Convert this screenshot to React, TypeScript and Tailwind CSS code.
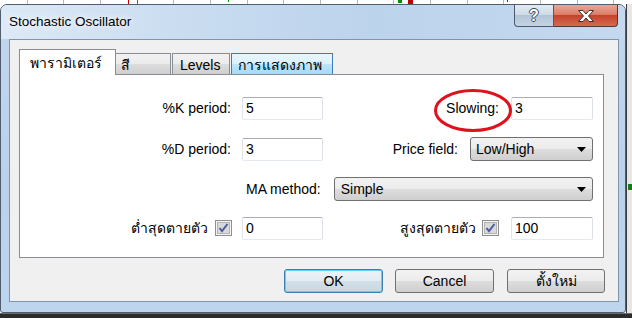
import React from 'react';

const gridLines = [27, 63, 100, 137, 173, 210, 247, 283, 320, 357, 393, 430, 467, 503, 540, 577, 613];

const TextBox = ({ value, className }: { value: string; className: string }) => (
  <div
    className={`h-[23px] rounded-[2px] border border-[#abadb3] border-b-[#e3e9ef] border-l-[#e2e3ea] border-r-[#dbdfe6] bg-white pl-[3px] text-[14px] leading-[21px] text-black ${className}`}
  >
    {value}
  </div>
);

const Select = ({ value, className }: { value: string; className: string }) => (
  <div
    className={`flex h-[24px] items-center rounded-[3px] border border-[#707070] bg-[linear-gradient(#f2f2f2_0%,#ebebeb_50%,#dddddd_50%,#cfcfcf_100%)] pl-[5px] pr-[6px] text-[14px] ${className}`}
  >
    <span className="flex-1">{value}</span>
    <svg width="9" height="5" viewBox="0 0 9 5">
      <path d="M0 0h9L4.5 5z" fill="#000" />
    </svg>
  </div>
);

const Check = () => (
  <svg width="17" height="16" viewBox="0 0 17 16">
    <rect x="0.5" y="0.5" width="16" height="15" fill="#f4f4f4" stroke="#8e8f8f" />
    <rect x="2.5" y="2.5" width="12" height="11" fill="#d9d9d9" stroke="#b4b4b4" />
    <path d="M4.5 8l2.5 3.2L12.5 4" stroke="#4a5f9e" strokeWidth="2" fill="none" />
  </svg>
);

const Button = ({ label, className }: { label: string; className: string }) => (
  <div
    className={`flex h-[24px] items-center justify-center rounded-[3px] border text-[14px] ${className}`}
  >
    {label}
  </div>
);

export default function App() {
  return (
    <div className="relative flex h-[318px] w-[632px] flex-col overflow-hidden bg-white font-['Liberation_Sans','DejaVu_Sans',sans-serif] text-black">
      {/* chart behind the dialog */}
      <div className="absolute inset-0">
        {gridLines.map((x) => (
          <div key={x} className="absolute top-0 h-full w-px bg-[#b8b8b8]" style={{ left: x }} />
        ))}
        <div className="absolute left-[128px] top-0 h-[4px] w-px bg-[#c80000]" />
        <div className="absolute left-[137px] top-0 h-[4px] w-px bg-[#00a000]" />
        <div className="absolute left-[228px] top-0 h-[2px] w-px bg-[#00a000]" />
        <div className="absolute left-[398px] top-0 h-[3px] w-[4px] bg-[#009000]" />
        <div className="absolute left-[408px] top-0 h-[4px] w-[5px] bg-[#c00000]" />
        <div className="absolute left-[507px] top-0 h-[2px] w-px bg-[#c00000]" />
      </div>

      <div className="relative h-[4px] shrink-0" />

      <div className="relative flex flex-1">
        {/* dialog window */}
        <div className="flex h-[309px] w-[626px] flex-col rounded-t-[7px] rounded-b-[3px] border border-[#4f5d6e] bg-[linear-gradient(180deg,#c2d7ee_0%,#bad1ea_60%,#bed5ee_100%)]">
          {/* title bar */}
          <div className="flex h-[34px] shrink-0 items-start rounded-t-[6px] bg-[linear-gradient(90deg,#dce9f6_0%,#c9dcf0_30%,#bcd3ec_60%,#c4d9ef_100%)]">
            <div className="self-center pl-[8px] pt-[1px] text-[13.5px] [text-shadow:0_0_6px_#ffffff,0_0_10px_#ffffff]">
              Stochastic Oscillator
            </div>
            <div className="ml-auto mr-[7px] flex h-[22px]">
              <div className="flex w-[40px] items-center justify-center rounded-bl-[4px] border border-t-0 border-[#4c5a6d] bg-[linear-gradient(180deg,#e3ebf3_0%,#cfdbe7_45%,#b3c4d6_50%,#c4d3e3_100%)] text-[16px] font-bold text-white [text-shadow:-1px_0_#3a475a,1px_0_#3a475a,0_-1px_#3a475a,0_1px_#3a475a]">
                ?
              </div>
              <div className="flex w-[64px] items-center justify-center rounded-br-[4px] border border-l-0 border-t-0 border-[#4c3a37] bg-[linear-gradient(180deg,#e9a798_0%,#dc7e68_45%,#c4432a_50%,#d46a52_100%)]">
                <svg width="18" height="14" viewBox="0 0 18 14">
                  <path
                    d="M1.5 1.5h4.5L9 5l3-3.5h4.5L11.5 7l5 5.5H12L9 9l-3 3.5H1.5l5-5.5z"
                    fill="#ffffff"
                    stroke="#3d3030"
                    strokeWidth="1"
                  />
                </svg>
              </div>
            </div>
          </div>

          {/* client area */}
          <div className="ml-[8px] mr-[6px] flex h-[263px] flex-col border border-[#8294a9] bg-[#f0f0f0] pl-[9px] pr-[14px] pt-[9px]">
            {/* tabs */}
            <div className="relative z-10 -mb-px flex h-[26px] items-end text-[14px]">
              <div className="flex h-[26px] w-[97px] items-center border border-b-0 border-[#898c95] bg-white pl-[10px] pt-[2px]">
                พารามิเตอร์
              </div>
              <div className="mb-px flex h-[21px] w-[55px] items-center border border-b-0 border-l-0 border-[#898c95] bg-[linear-gradient(180deg,#f2f2f2_0%,#ebebeb_50%,#dddddd_50%,#cfcfcf_100%)] pl-[5px] pt-[2px]">
                สี
              </div>
              <div className="mb-px ml-px flex h-[21px] w-[58px] items-center border border-b-0 border-[#898c95] bg-[linear-gradient(180deg,#f2f2f2_0%,#ebebeb_50%,#dddddd_50%,#cfcfcf_100%)] pl-[7px] pt-[2px]">
                Levels
              </div>
              <div className="mb-px ml-px flex h-[21px] w-[102px] items-center border border-b-0 border-[#3c7fb1] bg-[linear-gradient(180deg,#eaf6fd_0%,#d9f0fc_50%,#bee6fd_50%,#a7d9f5_100%)] pl-[6px] pt-[2px]">
                การแสดงภาพ
              </div>
            </div>

            {/* tab page */}
            <div className="relative flex h-[184px] flex-col border border-[#898c95] bg-white pr-[10px] text-[14px]">
              <div className="mt-[21px] flex h-[24px] items-center">
                <div className="w-[211px] text-right">%K period:</div>
                <TextBox value="5" className="ml-[11px] w-[81px]" />
                <div className="flex flex-1 items-center justify-end">
                  <div>Slowing:</div>
                  <TextBox value="3" className="ml-[12px] w-[82px]" />
                </div>
              </div>

              <div className="mt-[17px] flex h-[24px] items-center">
                <div className="w-[211px] text-right">%D period:</div>
                <TextBox value="3" className="ml-[11px] w-[81px]" />
                <div className="flex flex-1 items-center justify-end">
                  <div>Price field:</div>
                  <Select value="Low/High" className="ml-[12px] w-[123px]" />
                </div>
              </div>

              <div className="mt-[16px] flex h-[24px] items-center pl-[226px]">
                <div>MA method:</div>
                <Select value="Simple" className="ml-[13px] flex-1 pl-[6px]" />
              </div>

              <div className="mt-[15px] flex h-[24px] items-center">
                <div className="flex w-[212px] items-center justify-end gap-[7px]">
                  <span>ต่ำสุดตายตัว</span>
                  <Check />
                </div>
                <TextBox value="0" className="ml-[10px] w-[81px]" />
                <div className="flex flex-1 items-center justify-end">
                  <span>สูงสุดตายตัว</span>
                  <div className="ml-[6px] flex">
                    <Check />
                  </div>
                  <TextBox value="100" className="ml-[12px] w-[82px]" />
                </div>
              </div>

              {/* red annotation ring */}
              <svg
                className="pointer-events-none absolute left-[413px] top-[13px]"
                width="80"
                height="45"
                viewBox="0 0 80 45"
              >
                <ellipse cx="40" cy="22.5" rx="37.5" ry="20" fill="none" stroke="#e0101c" strokeWidth="3" />
              </svg>
            </div>

            {/* dialog buttons */}
            <div className="-mr-px mt-[11px] flex justify-end">
              <Button
                label="OK"
                className="w-[99px] border-[#3c7fb1] bg-[linear-gradient(180deg,#eef4f8_0%,#e3ecf2_50%,#d3dfe8_50%,#c9d7e2_100%)] shadow-[inset_0_0_0_1px_#5fd0f5]"
              />
              <Button
                label="Cancel"
                className="ml-[12px] w-[99px] border-[#707070] bg-[linear-gradient(180deg,#f2f2f2_0%,#ebebeb_50%,#dddddd_50%,#cfcfcf_100%)]"
              />
              <Button
                label="ตั้งใหม่"
                className="ml-[13px] w-[98px] border-[#707070] bg-[linear-gradient(180deg,#f2f2f2_0%,#ebebeb_50%,#dddddd_50%,#cfcfcf_100%)]"
              />
            </div>
          </div>
        </div>

        {/* strip of chart to the right */}
        <div className="relative flex-1 border-l border-[#3a3a3a] bg-[#e6e6e6]">
          <div className="absolute left-[1px] top-[180px] h-[6px] w-[4px] bg-[#1a7a1a]" />
        </div>
      </div>

      <div className="relative h-[5px] shrink-0 border-t border-[#6b6b6b] bg-[#2c2c2c]" />
    </div>
  );
}
